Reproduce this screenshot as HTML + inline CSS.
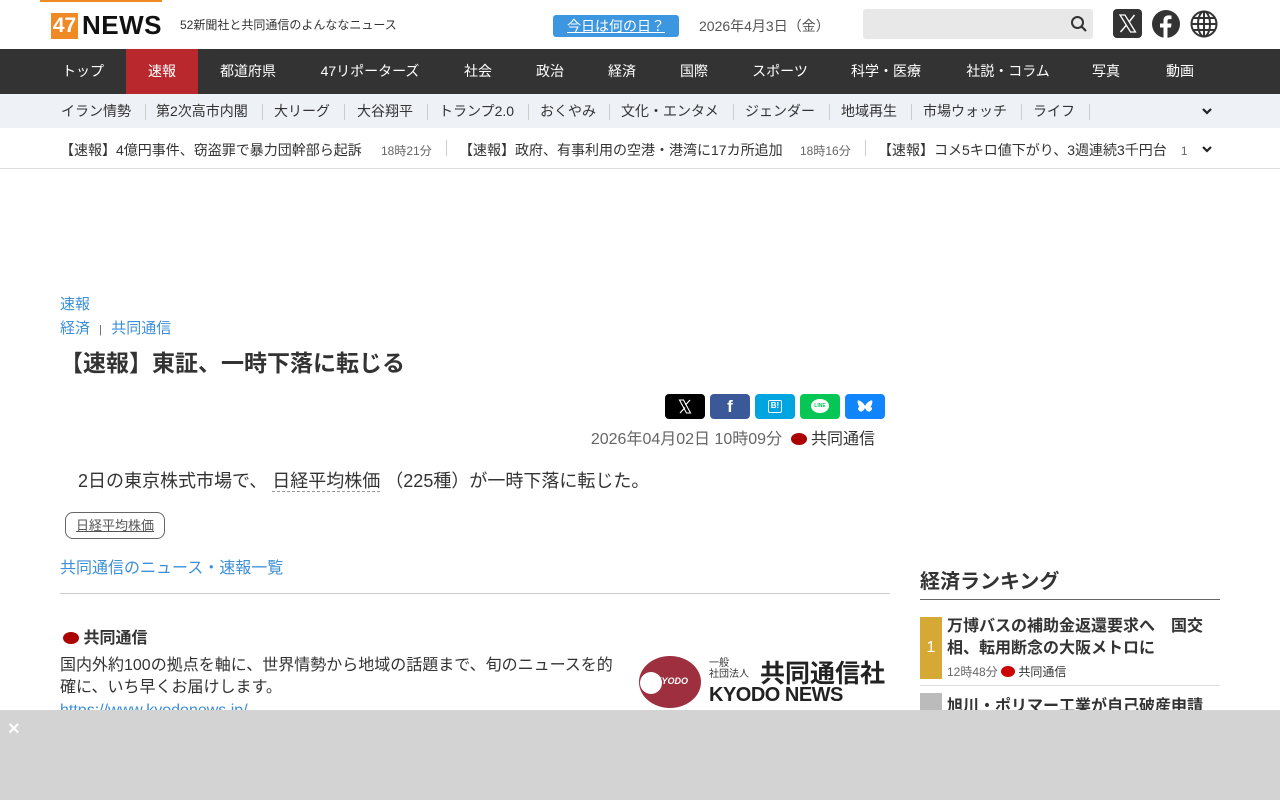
<!DOCTYPE html>
<html><head><meta charset="utf-8"><style>
*{margin:0;padding:0;box-sizing:border-box}
body{width:1280px;height:800px;overflow:hidden;background:#fff;font-family:"Liberation Sans","Noto Sans CJK JP",sans-serif;color:#333;position:relative}
.a{position:absolute;white-space:nowrap}
.nav span{position:absolute;top:0;height:45px;line-height:45px;color:#fff;font-size:14px;transform:translateX(-50%)}
.sub span{position:absolute;top:0;line-height:34px;font-size:14px;color:#333}
.sep{position:absolute;top:10px;width:1px;height:16px;background:#ccc}
.sh{position:absolute;top:394px;width:40px;height:25px;border-radius:4px}
</style></head><body>
<div class="a" style="left:40px;top:0;width:122px;height:2px;background:#f08a24"></div>
<div class="a" style="left:51px;top:13px;width:27px;height:26px;background:#f08a24;color:#fff;font-weight:bold;font-size:21px;line-height:26px;text-align:center">47</div>
<div class="a" style="left:82px;top:10px;font-weight:bold;font-size:26px;color:#111;letter-spacing:0.5px">NEWS</div>
<div class="a" style="left:180px;top:16px;font-size:12px">52新聞社と共同通信のよんななニュース</div>
<div class="a" style="left:553px;top:15px;width:126px;height:22px;background:#3d96e0;border-radius:3px;color:#fff;font-size:14px;text-align:center;line-height:22px"><u>今日は何の日？</u></div>
<div class="a" style="left:699px;top:16px;font-size:14px;color:#555">2026年4月3日（金）</div>
<div class="a" style="left:863px;top:9px;width:230px;height:30px;background:#e8e8e8;border-radius:3px"></div>
<svg class="a" style="left:1070px;top:15px" width="18" height="18" viewBox="0 0 18 18"><circle cx="7.5" cy="7.5" r="5.5" fill="none" stroke="#333" stroke-width="2"/><path d="M11.5 11.5L16 16" stroke="#333" stroke-width="2.2"/></svg>
<div class="a" style="left:1113px;top:9px;width:29px;height:29px;background:#333;border-radius:4px"><svg width="29" height="29" viewBox="0 0 29 29"><path d="M7 6h5l10.5 17h-5z" fill="none" stroke="#fff" stroke-width="1.3"/><path d="M7.5 23L13.5 16M16 13L21.5 6" stroke="#fff" stroke-width="1.5"/></svg></div>
<svg class="a" style="left:1152px;top:10px" width="28" height="28" viewBox="0 0 28 28"><circle cx="14" cy="14" r="14" fill="#333"/><path d="M15.5 28V17.5H19l.5-4h-4V11c0-1.1.4-1.9 2-1.9h2V5.6c-.4 0-1.6-.2-3-.2-3 0-5 1.8-5 5.1v3H8v4h3.5V28z" fill="#fff"/></svg>
<svg class="a" style="left:1190px;top:10px" width="28" height="28" viewBox="0 0 28 28" fill="none" stroke="#333" stroke-width="2"><circle cx="14" cy="14" r="12.5"/><ellipse cx="14" cy="14" rx="6" ry="12.5"/><path d="M14 1.5v25M1.5 14h25M3.5 8h21M3.5 20h21"/></svg>
<div class="a nav" style="left:0;top:49px;width:1280px;height:45px;background:#333">
<div class="a" style="left:126px;top:0;width:72px;height:45px;background:#b8282d"></div>
<span style="left:83px">トップ</span><span style="left:162px">速報</span><span style="left:248px">都道府県</span><span style="left:370px">47リポーターズ</span><span style="left:478px">社会</span><span style="left:550px">政治</span><span style="left:622px">経済</span><span style="left:694px">国際</span><span style="left:780px">スポーツ</span><span style="left:886px">科学・医療</span><span style="left:1008px">社説・コラム</span><span style="left:1106px">写真</span><span style="left:1180px">動画</span>
</div>
<div class="a sub" style="left:0;top:94px;width:1280px;height:34px;background:#eef1f5">
<span style="left:61px">イラン情勢</span><i class="sep" style="left:145px"></i><span style="left:156px">第2次高市内閣</span><i class="sep" style="left:262px"></i><span style="left:274px">大リーグ</span><i class="sep" style="left:344px"></i><span style="left:357px">大谷翔平</span><i class="sep" style="left:427px"></i><span style="left:439px">トランプ2.0</span><i class="sep" style="left:528px"></i><span style="left:540px">おくやみ</span><i class="sep" style="left:609px"></i><span style="left:621px">文化・エンタメ</span><i class="sep" style="left:733px"></i><span style="left:745px">ジェンダー</span><i class="sep" style="left:829px"></i><span style="left:841px">地域再生</span><i class="sep" style="left:911px"></i><span style="left:923px">市場ウォッチ</span><i class="sep" style="left:1021px"></i><span style="left:1033px">ライフ</span><i class="sep" style="left:1089px"></i>
<svg class="a" style="left:1201px;top:12px" width="12" height="10" viewBox="0 0 12 10"><path d="M2 3l4 4 4-4" fill="none" stroke="#222" stroke-width="2.2"/></svg>
</div>
<div class="a" style="left:0;top:128px;width:1280px;height:41px;border-bottom:1px solid #ddd;font-size:14px">
<span class="a" style="left:60px;top:12px">【速報】4億円事件、窃盗罪で暴力団幹部ら起訴</span><span class="a" style="left:381px;top:14px;font-size:12px;color:#666">18時21分</span><i class="sep" style="left:446px;top:12px"></i>
<span class="a" style="left:459px;top:12px">【速報】政府、有事利用の空港・港湾に17カ所追加</span><span class="a" style="left:800px;top:14px;font-size:12px;color:#666">18時16分</span><i class="sep" style="left:865px;top:12px"></i>
<span class="a" style="left:878px;top:12px;width:310px;overflow:hidden">【速報】コメ5キロ値下がり、3週連続3千円台　<small style="font-size:12px;color:#666">17</small></span>
<svg class="a" style="left:1201px;top:16px" width="12" height="10" viewBox="0 0 12 10"><path d="M2 3l4 4 4-4" fill="none" stroke="#222" stroke-width="2.2"/></svg>
</div>
<div class="a" style="left:60px;top:293px;font-size:15px;color:#3d8fd8">速報</div>
<div class="a" style="left:60px;top:317px;font-size:15px;color:#3d8fd8">経済 <span style="color:#666;font-size:11px;margin:0 5px">|</span> 共同通信</div>
<h1 class="a" style="left:60px;top:344px;font-size:23px;font-weight:bold;color:#333">【速報】東証、一時下落に転じる</h1>
<div class="sh" style="left:665px;background:#000"><svg width="40" height="25" viewBox="0 0 40 25"><path d="M14.5 6h4l7 13h-4z" fill="none" stroke="#fff" stroke-width="1.1"/><path d="M15 19l5-5.5M20.5 11l4.5-5" stroke="#fff" stroke-width="1.2"/></svg></div>
<div class="sh" style="left:710px;background:#3b5998;color:#fff;text-align:center;line-height:25px;font-weight:bold;font-size:17px">f</div>
<div class="sh" style="left:755px;background:#00a4de"><div style="margin:6px auto;width:14px;height:13px;border:1.5px solid #fff;border-radius:2px;color:#fff;font-size:8px;font-weight:bold;text-align:center;line-height:10px">B!</div></div>
<div class="sh" style="left:800px;background:#06c755"><div style="margin:5px auto;width:18px;height:14px;background:#fff;border-radius:50%;color:#06c755;font-size:5px;font-weight:bold;text-align:center;line-height:14px">LINE</div></div>
<div class="sh" style="left:845px;background:#1185fe"><svg width="40" height="25" viewBox="0 0 40 25"><path d="M20 12C18 8 14 6 13 6.5c-1 .5 0 5 1.5 6.5-2 .5-2 2.5 0 4 2 1.5 4 0 5.5-3 1.5 3 3.5 4.5 5.5 3 2-1.5 2-3.5 0-4 1.5-1.5 2.5-6 1.5-6.5C26 6 22 8 20 12z" fill="#fff"/></svg></div>
<div class="a" style="left:574px;top:425px;width:301px;text-align:right;font-size:16px;color:#666">2026年04月02日 10時09分 <span style="display:inline-block;width:16px;height:12px;border-radius:50%;background:#a00;vertical-align:-1px;margin-left:4px"></span> <span style="color:#333">共同通信</span></div>
<div class="a" style="left:78px;top:467px;font-size:18px">2日の東京株式市場で、 <span style="border-bottom:1px dashed #999">日経平均株価</span> （225種）が一時下落に転じた。</div>
<div class="a" style="left:65px;top:512px;width:100px;height:27px;border:1px solid #666;border-radius:8px;font-size:13px;color:#555;text-align:center;line-height:25px"><u>日経平均株価</u></div>
<div class="a" style="left:60px;top:554px;font-size:16px;color:#3d8fd8">共同通信のニュース・速報一覧</div>
<div class="a" style="left:60px;top:593px;width:830px;height:1px;background:#ccc"></div>
<div class="a" style="left:63px;top:624px;font-size:16px;font-weight:bold"><span style="display:inline-block;width:16px;height:12px;border-radius:50%;background:#a00;vertical-align:-1px"></span> 共同通信</div>
<div class="a" style="left:60px;top:655px;font-size:16px;line-height:22px;white-space:normal;width:560px">国内外約100の拠点を軸に、世界情勢から地域の話題まで、旬のニュースを的確に、いち早くお届けします。</div>
<div class="a" style="left:60px;top:702px;font-size:16px;color:#3d8fd8">https://www.kyodonews.jp/</div>
<div class="a" style="left:639px;top:656px;width:62px;height:52px;border-radius:50%;background:#9e2f3f"><div style="position:absolute;left:1px;top:16px;width:22px;height:22px;border-radius:50%;background:#fff"></div><span style="position:absolute;left:16px;top:20px;color:#fff;font-size:9px;font-style:italic;font-weight:bold">KYODO</span></div>
<div class="a" style="left:709px;top:658px;font-size:10px;line-height:11px">一般<br>社団法人</div>
<div class="a" style="left:760px;top:654px;font-size:25px;font-weight:bold;color:#222">共同通信社</div>
<div class="a" style="left:709px;top:684px;font-size:20px;font-weight:bold;color:#222;letter-spacing:-0.5px">KYODO NEWS</div>
<div class="a" style="left:920px;top:565px;font-size:20px;font-weight:bold">経済ランキング</div>
<div class="a" style="left:920px;top:599px;width:300px;height:1px;background:#666"></div>
<div class="a" style="left:920px;top:617px;width:22px;height:62px;background:#d6a936;color:#fff;text-align:center;line-height:62px;font-size:16px">1</div>
<div class="a" style="left:947px;top:616px;font-size:16px;font-weight:bold;line-height:22px">万博バスの補助金返還要求へ　国交<br>相、転用断念の大阪メトロに</div>
<div class="a" style="left:947px;top:663px;font-size:12px;color:#666">12時48分 <span style="display:inline-block;width:14px;height:11px;border-radius:50%;background:#c00;vertical-align:-1px"></span> <span style="color:#333">共同通信</span></div>
<div class="a" style="left:920px;top:685px;width:300px;height:1px;background:#ddd"></div>
<div class="a" style="left:920px;top:693px;width:22px;height:30px;background:#bbb"></div>
<div class="a" style="left:947px;top:692px;font-size:16px;font-weight:bold">旭川・ポリマー工業が自己破産申請</div>
<div class="a" style="left:0;top:710px;width:1280px;height:90px;background:#d3d3d3"></div>
<div class="a" style="left:8px;top:718px;color:#fff;font-size:20px;font-weight:bold">×</div>
</body></html>
